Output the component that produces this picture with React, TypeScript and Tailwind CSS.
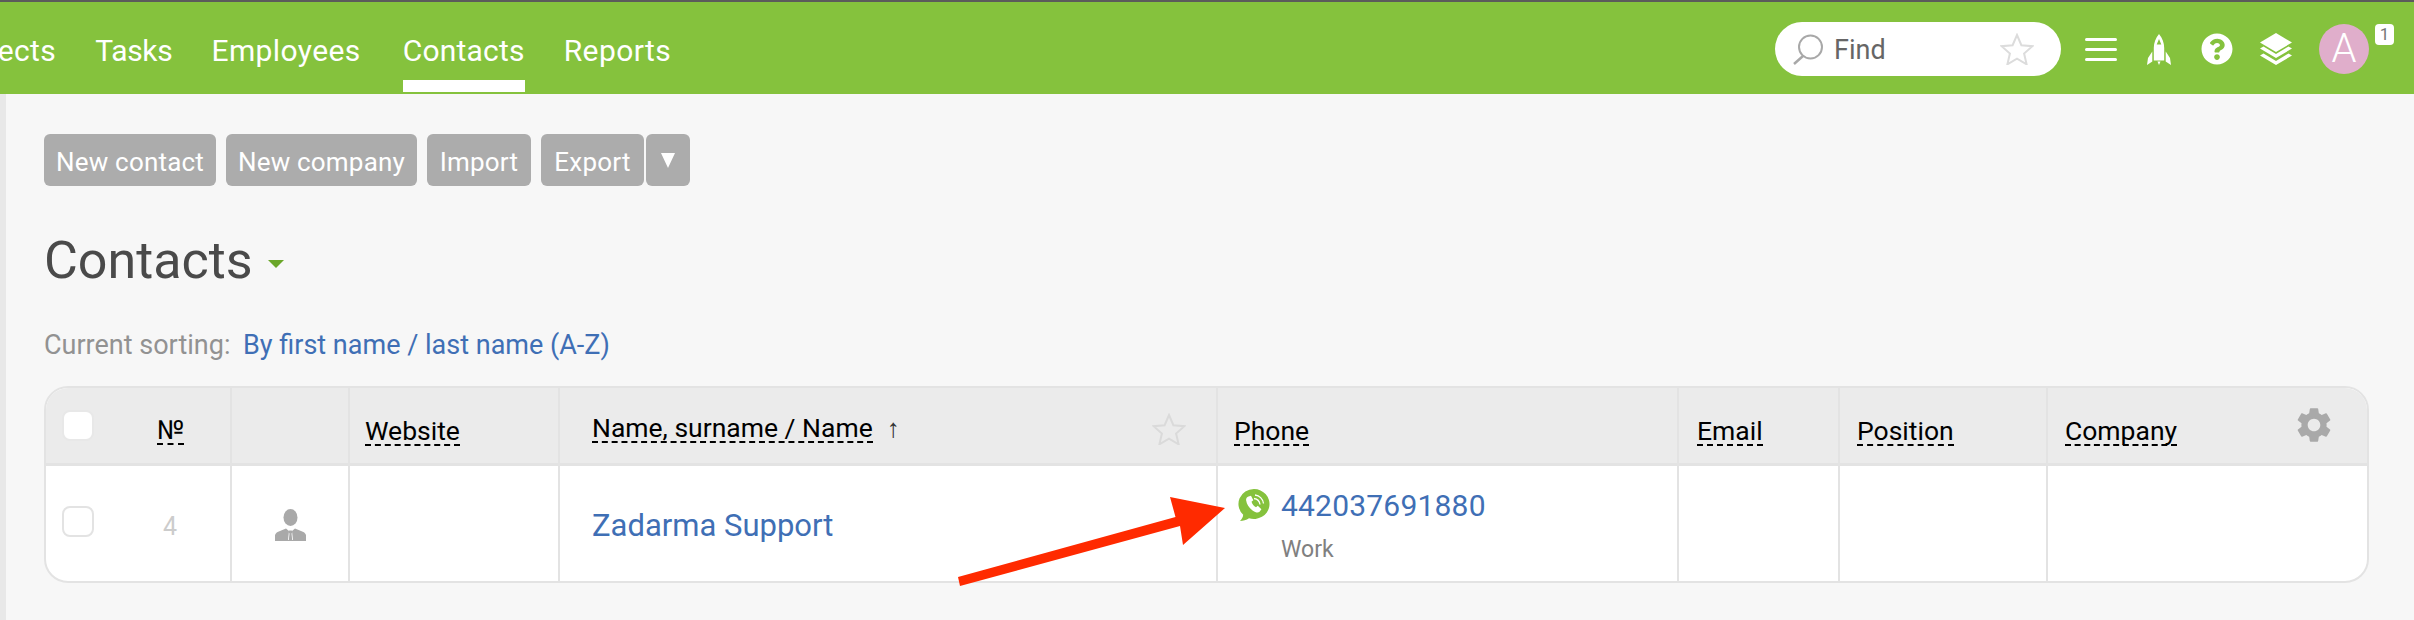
import React from "react";
import { FaQuestionCircle } from "react-icons/fa";
import { MdSettings } from "react-icons/md";

const Star: React.FC<{ className: string }> = ({ className }) => (
  <svg viewBox="0 0 34 32" className={className} fill="none" stroke="currentColor" strokeWidth="2">
    <path d="M17 2l4.4 10.2 11 1-8.3 7.3 2.5 10.8-9.6-5.7-9.6 5.7 2.5-10.8L1.6 13.2l11-1z" />
  </svg>
);

const SearchIcon = () => (
  <svg viewBox="0 0 30 31" className="w-[30px] h-[31px] text-[#a8a8a8]" fill="none" stroke="currentColor" strokeWidth="2">
    <circle cx="17.5" cy="13" r="11.5" />
    <path d="M10 22L1 30" strokeWidth="2.5" />
  </svg>
);

const Rocket = () => (
  <svg viewBox="0 0 24 31" className="w-[24px] h-[31px]" fill="white">
    <path fillRule="evenodd" d="M12 0C8.5 4 6.8 9 6.8 14v12.5h10.400V14C17.200 9 15.500 4 12 0zM12 5l2.300 5.500H9.700z" />
    <path d="M5.300 17.500L1 24 0 31l5.300-3.500zM18.700 17.500L23 24l1 7-5.300-3.500zM10.500 27.500h3L12 31z" />
  </svg>
);

const Layers = () => (
  <svg viewBox="0 0 32 32" className="w-[32px] h-[32px]" fill="white">
    <path d="M16 0l16 9.500-16 9.500L0 9.500z" />
    <path d="M0 15.500l3.500-2L16 21l12.500-7.500 3.500 2-16 9.500z" />
    <path d="M0 22.500l3.500-2L16 28l12.500-7.500 3.500 2L16 32z" />
  </svg>
);

const Person = () => (
  <svg viewBox="0 0 31 32" className="w-[31px] h-[32px]" fill="#a9a9a9">
    <ellipse cx="15.500" cy="8.500" rx="7" ry="8.500" />
    <path d="M0 32v-6q1-3 5-4l6-2.500 3 2.500-1 9h5l-1-9 3-2.500 6 2.500q4 1 5 4v6z" />
    <path d="M14.200 21.500h2.600l.7 2-1 1 .8 7.500h-3.600l.8-7.500-1-1z" />
  </svg>
);

const ViberIcon = () => (
  <svg viewBox="0 0 32 32" className="w-[32px] h-[32px] shrink-0 mt-[1px]">
    <path fill="#85c23d" d="M16 0a15.500 15 0 1 1-5 29.200c-2.500 1.800-6 2.800-9 2.800 1.500-1.500 3-3.500 3.200-6.200A15.500 15 0 0 1 16 0z" />
    <path
      fill="white"
      d="M10.500 7.500l2.500-.8 2.300 4.600-1.800 1.500c.8 2.500 2.300 4.200 4.500 5.500l1.800-1.500 3.600 3.500-1.600 2.200c-1 1-2.600 1.200-4 .7-5-2-8.800-6.500-9.700-12 -.2-1.500.7-3 2.400-3.700z"
    />
    <path fill="none" stroke="white" strokeWidth="1.300" d="M16 9.500a7 7 0 0 1 6 6M17 6a10 10 0 0 1 8.500 8.500" />
  </svg>
);

const RedArrow = () => (
  <svg viewBox="0 0 273 95" className="absolute left-[909px] top-[107px] w-[273px] h-[95px]" fill="#ff2a00">
    <path d="M3 82L220.500 22 215 2l55 11-42 37-3-19L5 91z" />
  </svg>
);

const Button: React.FC<{ label: string; w: string }> = ({ label, w }) => (
  <div className={`${w} h-[52px] pt-[4px] flex items-center justify-center rounded-[6px] bg-[#acacac] text-white text-[26px] tracking-[0.2px]`}>
    {label}
  </div>
);

const HeadLabel: React.FC<{ children: React.ReactNode }> = ({ children }) => (
  <span className="inline-block self-start text-[26.5px] leading-[26px] text-black border-b-2 border-dashed border-black">{children}</span>
);

const App: React.FC = () => {
  return (
    <div className="w-[2414px] h-[620px] overflow-hidden bg-[#f7f7f7] font-['Roboto',sans-serif]">
      <div className="h-[2px] bg-[#5b5b5b]" />

      <div className="h-[92px] bg-[#85c23d] flex items-start justify-between text-white">
        <nav className="flex -ml-[57px] gap-[39px] text-[30px] leading-[36px] tracking-[0.4px]">
          <a className="h-[92px] pt-[31px]">Projects</a>
          <a className="h-[92px] pt-[31px] tracking-[-0.3px]">Tasks</a>
          <a className="h-[92px] pt-[31px]">Employees</a>
          <a className="ml-[3px] h-[90px] pt-[31px] border-b-[12px] border-white tracking-[0.2px]">Contacts</a>
          <a className="h-[92px] pt-[31px]">Reports</a>
        </nav>

        <div className="flex items-center pt-[20px] pr-[20px]">
          <div className="w-[286px] h-[54px] rounded-full bg-white flex items-center pl-[18px] pr-[27px] text-[27px] text-[#666]">
            <SearchIcon />
            <span className="ml-[11px] pt-[3px] flex-1">Find</span>
            <Star className="w-[34px] h-[32px] text-[#dcdcdc]" />
          </div>
          <div className="ml-[24px] w-[32px] flex flex-col gap-[7px]">
            <div className="h-[3px] rounded-full bg-white" />
            <div className="h-[3px] rounded-full bg-white" />
            <div className="h-[3px] rounded-full bg-white" />
          </div>
          <div className="ml-[30px]"><Rocket /></div>
          <FaQuestionCircle className="ml-[30px] text-[32px] text-white" />
          <div className="ml-[27px]"><Layers /></div>
          <div className="ml-[27px] w-[50px] h-[50px] rounded-full bg-[#e0aecb] flex items-center justify-center text-[40px] font-light text-white">A</div>
          <div className="ml-[6px] -mt-[29px] w-[19px] h-[21px] rounded-[4px] bg-white flex items-center justify-center text-[17px] text-[#777]">1</div>
        </div>
      </div>

      <div className="flex h-[526px]">
        <div className="w-[6px] bg-[#e8e8e8]" />
        <main className="pl-[38px] w-[2331px]">
          <div className="flex gap-[10px] mt-[40px]">
            <Button label="New contact" w="w-[172px]" />
            <Button label="New company" w="w-[191px]" />
            <Button label="Import" w="w-[104px]" />
            <div className="flex gap-[2px]">
              <Button label="Export" w="w-[103px]" />
              <div className="w-[44px] h-[52px] rounded-[6px] bg-[#acacac] flex items-center justify-center">
                <div className="w-0 h-0 border-x-[7px] border-x-transparent border-t-[15px] border-t-white" />
              </div>
            </div>
          </div>

          <div className="flex items-center mt-[45px] h-[60px]">
            <h1 className="text-[52px] leading-[60px] text-[#4a4a4a]">Contacts</h1>
            <div className="ml-[15px] mt-[5px] w-0 h-0 border-x-[8px] border-x-transparent border-t-[8px] border-t-[#6aa629]" />
          </div>

          <div className="flex mt-[39px] h-[30px] items-center text-[27px]">
            <span className="text-[#929292] w-[199px]">Current sorting:</span>
            <a className="text-[#3f6fb5]">By first name / last name (A-Z)</a>
          </div>

          <div className="relative mt-[26px] w-[2325px] h-[197px] rounded-[24px] border-2 border-[#e3e3e3] bg-white">
            <div className="flex h-[78px] bg-[#ebebeb] border-b-[3px] border-[#e3e3e3] rounded-t-[22px]">
              <div className="w-[186px] shrink-0 flex border-r-2 border-[#e3e3e3] pl-[16px]">
                <div className="mt-[22px] w-[32px] h-[31px] rounded-[8px] border-2 border-[#e8e8e8] bg-white" />
                <div className="ml-[63px] pt-[29px]"><HeadLabel>№</HeadLabel></div>
              </div>
              <div className="w-[118px] shrink-0 border-r-2 border-[#e3e3e3]" />
              <div className="w-[210px] shrink-0 border-r-2 border-[#e3e3e3] pl-[15px] pt-[30px]"><HeadLabel>Website</HeadLabel></div>
              <div className="w-[658px] shrink-0 border-r-2 border-[#e3e3e3] pl-[32px] pr-[30px] pt-[25px] flex justify-between">
                <div className="flex items-start pt-[2px]">
                  <HeadLabel>Name, surname / Name</HeadLabel>
                  <span className="ml-[14px] text-[26px] leading-[26px] text-[#333]">↑</span>
                </div>
                <Star className="w-[34px] h-[32px] text-[#dadada]" />
              </div>
              <div className="w-[461px] shrink-0 border-r-2 border-[#e3e3e3] pl-[16px] pt-[30px]"><HeadLabel>Phone</HeadLabel></div>
              <div className="w-[161px] shrink-0 border-r-2 border-[#e3e3e3] pl-[18px] pt-[30px]"><HeadLabel>Email</HeadLabel></div>
              <div className="w-[208px] shrink-0 border-r-2 border-[#e3e3e3] pl-[17px] pt-[30px]"><HeadLabel>Position</HeadLabel></div>
              <div className="flex-1 pl-[17px] pr-[32px] pt-[30px] flex justify-between">
                <HeadLabel>Company</HeadLabel>
                <MdSettings className="-mt-[14px] text-[42px] text-[#a9a9a9]" />
              </div>
            </div>

            <div className="flex h-[115px]">
              <div className="w-[186px] shrink-0 flex border-r-2 border-[#e3e3e3] pl-[16px]">
                <div className="mt-[40px] w-[32px] h-[31px] rounded-[8px] border-2 border-[#e3e3e3] bg-white" />
                <div className="ml-[69px] mt-[46px] text-[25px] leading-[30px] text-[#cccccc]">4</div>
              </div>
              <div className="w-[118px] shrink-0 border-r-2 border-[#e3e3e3] pl-[43px] pt-[43px]"><Person /></div>
              <div className="w-[210px] shrink-0 border-r-2 border-[#e3e3e3]" />
              <div className="w-[658px] shrink-0 border-r-2 border-[#e3e3e3] pl-[32px] pt-[40px] text-[31px] leading-[40px] text-[#3f6fb5]">Zadarma Support</div>
              <div className="w-[461px] shrink-0 border-r-2 border-[#e3e3e3] pl-[20px] pt-[22px] flex gap-[11px]">
                <ViberIcon />
                <div>
                  <div className="text-[30px] leading-[36px] tracking-[0.2px] text-[#3f6fb5]">442037691880</div>
                  <div className="mt-[13px] text-[23px] leading-[26px] text-[#808080]">Work</div>
                </div>
              </div>
              <div className="w-[161px] shrink-0 border-r-2 border-[#e3e3e3]" />
              <div className="w-[208px] shrink-0 border-r-2 border-[#e3e3e3]" />
              <div className="flex-1" />
            </div>

            <RedArrow />
          </div>
        </main>
      </div>
    </div>
  );
};

export default App;
